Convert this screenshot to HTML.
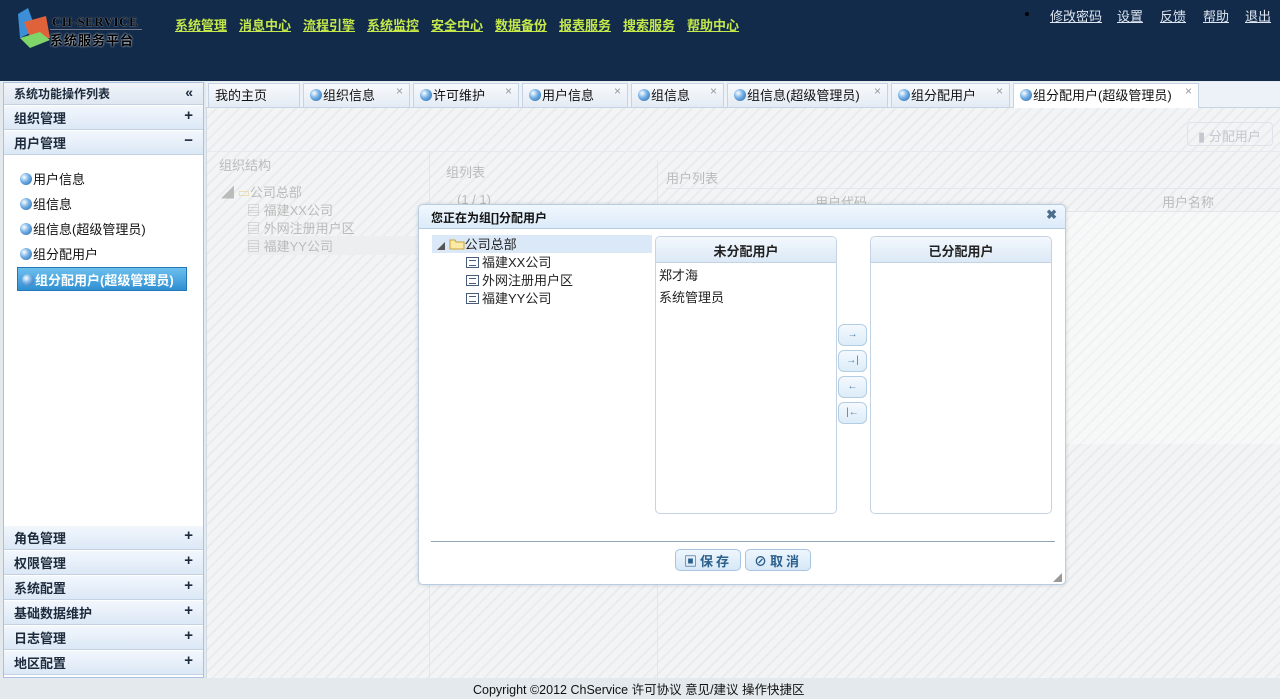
<!DOCTYPE html>
<html><head><meta charset="utf-8">
<style>
*{margin:0;padding:0;box-sizing:border-box}
body{width:1280px;height:699px;overflow:hidden;position:relative;font-family:"Liberation Sans","Noto Sans CJK SC",sans-serif;font-size:12px;color:#222;background:#e3e9ed}
.abs{position:absolute}
#hdr{left:0;top:0;width:1280px;height:81px;background:#122b4b}
.nav a{position:absolute;top:15px;color:#c5e84a;text-decoration:underline;font-weight:bold;font-size:13px;white-space:nowrap}
.top a{position:absolute;top:6px;color:#dfe6f0;text-decoration:underline;font-size:13px;white-space:nowrap}
.stripe{background:repeating-linear-gradient(135deg,#f3f4f5 0,#f3f4f5 6px,#e9ebed 6px,#e9ebed 8px)}
.sbh{left:4px;width:199px;height:24px;background:linear-gradient(#f3f7fd,#dce8f6);border-bottom:1px solid #c4d3e4;font-weight:bold;font-size:13px;color:#1c2a3c;padding:2px 0 0 10px}
.sbh b{position:absolute;right:10px;top:1px;font-size:15px}
.it{left:20px;font-size:13px;color:#111}
.ball{display:inline-block;width:12px;height:12px;border-radius:50%;background:radial-gradient(circle at 35% 35%,#fff 0,#7ab4e8 40%,#1f63a8 100%);vertical-align:-1px;margin-right:1px}
.tab{top:83px;height:24px;background:linear-gradient(#f7f9fc,#e4ebf4);border:1px solid #c6d3e2;border-bottom:none;font-size:13px;padding:1px 0 0 6px;color:#111}
.tab i{position:absolute;right:6px;top:0px;font-style:normal;color:#999;font-size:12px}
.fade{color:#bbb}
.btn{height:22px;border:1px solid #a9c4de;border-radius:5px;background:linear-gradient(#eef6fd,#d6e8f7);color:#2b5f8c;font-weight:bold;font-size:13px;text-align:center;padding-top:1px;letter-spacing:3px}
.ar{left:838px;width:29px;height:22px;border:1px solid #b3cde3;border-radius:6px;background:linear-gradient(#f4f9fe,#dcecf8);color:#4a7ea8;font-size:10px;text-align:center;line-height:20px}
.doc{display:inline-block;width:13px;height:11px;border:1px solid #4a5d78;background:#fff;vertical-align:-1px;margin-right:3px;position:relative}
.doc:after{content:"";position:absolute;left:2px;top:2px;width:7px;height:4px;border-top:1px solid #4a5d78;border-bottom:1px solid #4a5d78}
</style></head><body>
<div id="hdr" class="abs">
 <svg class="abs" style="left:14px;top:8px" width="40" height="42"><polygon points="4,6 14,0 22,22 6,30" fill="#3c8fd6"/><polygon points="10,14 32,8 36,30 18,34" fill="#e0623a"/><polygon points="6,30 26,24 36,32 16,40" fill="#7fd46a"/></svg>
 <div class="abs" style="left:52px;top:14px;font-family:'Liberation Serif',serif;font-weight:bold;font-size:13px;color:#000;text-shadow:0 0 1px #fff;letter-spacing:0.5px">CH-SERVICE</div>
 <div class="abs" style="left:50px;top:29px;width:92px;border-top:1px solid #778"></div>
 <div class="abs" style="left:50px;top:30px;font-size:13px;color:#000;font-weight:bold;letter-spacing:1px;text-shadow:0 0 2px #fff">系统服务平台</div>
 <div class="nav"><a style="left:175px">系统管理</a><a style="left:239px">消息中心</a><a style="left:303px">流程引擎</a><a style="left:367px">系统监控</a><a style="left:431px">安全中心</a><a style="left:495px">数据备份</a><a style="left:559px">报表服务</a><a style="left:623px">搜索服务</a><a style="left:687px">帮助中心</a></div>
 <div class="abs" style="left:1025px;top:12px;width:4px;height:4px;border-radius:50%;background:#000"></div>
 <div class="top"><a style="left:1050px">修改密码</a><a style="left:1117px">设置</a><a style="left:1160px">反馈</a><a style="left:1203px">帮助</a><a style="left:1245px">退出</a></div>
</div>

<!-- sidebar -->
<div class="abs" style="left:3px;top:82px;width:201px;height:596px;background:#fff;border:1px solid #a9c1dc"></div>
<div class="abs sbh" style="top:83px;height:22px;padding-top:2px;font-size:12px;background:linear-gradient(#f1f5fa,#dfe7f1)">系统功能操作列表<b style="font-size:14px">«</b></div>
<div class="abs sbh" style="top:106px">组织管理<b>+</b></div>
<div class="abs sbh" style="top:131px">用户管理<b>−</b></div>
<div class="abs it" style="top:169px"><span class="ball"></span>用户信息</div>
<div class="abs it" style="top:194px"><span class="ball"></span>组信息</div>
<div class="abs it" style="top:219px"><span class="ball"></span>组信息(超级管理员)</div>
<div class="abs it" style="top:244px"><span class="ball"></span>组分配用户</div>
<div class="abs" style="left:17px;top:267px;width:170px;height:24px;background:linear-gradient(#6cc0ee,#2f8fd2);border:1px solid #2476b6;color:#fff;font-weight:bold;font-size:13px;padding:2px 0 0 4px"><span class="ball"></span>组分配用户(超级管理员)</div>
<div class="abs sbh" style="top:526px">角色管理<b>+</b></div>
<div class="abs sbh" style="top:551px">权限管理<b>+</b></div>
<div class="abs sbh" style="top:576px">系统配置<b>+</b></div>
<div class="abs sbh" style="top:601px">基础数据维护<b>+</b></div>
<div class="abs sbh" style="top:626px">日志管理<b>+</b></div>
<div class="abs sbh" style="top:651px">地区配置<b>+</b></div>

<!-- tabs -->
<div class="abs" style="left:206px;top:82px;width:1074px;height:26px;background:#edf2f8;border-bottom:1px solid #c6d3e2"></div>
<div class="abs tab" style="left:208px;width:92px">我的主页</div>
<div class="abs tab" style="left:303px;width:107px"><span class="ball"></span>组织信息<i>×</i></div>
<div class="abs tab" style="left:413px;width:106px"><span class="ball"></span>许可维护<i>×</i></div>
<div class="abs tab" style="left:522px;width:106px"><span class="ball"></span>用户信息<i>×</i></div>
<div class="abs tab" style="left:631px;width:93px"><span class="ball"></span>组信息<i>×</i></div>
<div class="abs tab" style="left:727px;width:161px"><span class="ball"></span>组信息(超级管理员)<i>×</i></div>
<div class="abs tab" style="left:891px;width:119px"><span class="ball"></span>组分配用户<i>×</i></div>
<div class="abs tab" style="left:1013px;width:186px;background:#fff;height:26px"><span class="ball"></span>组分配用户(超级管理员)<i>×</i></div>

<!-- main faded content -->
<div class="abs stripe" style="left:206px;top:108px;width:1074px;height:570px;border-left:1px solid #d0dbe6"></div>
<div class="abs" style="left:1187px;top:122px;width:86px;height:24px;border:1px solid #dde3ea;border-radius:4px;color:#c2c8ce;font-size:13px;padding:3px 0 0 10px">▮ 分配用户</div>
<div class="abs" style="left:207px;top:151px;width:1073px;border-top:1px solid #e6eaee"></div>
<div class="abs fade" style="left:219px;top:155px;font-size:13px">组织结构</div>
<div class="abs" style="left:429px;top:152px;height:526px;border-left:1px solid #e2e6ea"></div>
<div class="abs" style="left:657px;top:160px;height:518px;border-left:1px solid #e2e6ea"></div>
<div class="abs fade" style="left:446px;top:162px;font-size:13px">组列表</div>
<div class="abs fade" style="left:666px;top:168px;font-size:13px">用户列表</div>
<div class="abs" style="left:666px;top:188px;width:614px;height:24px;border-top:1px solid #e3e7eb;border-bottom:1px solid #e3e7eb"></div>
<div class="abs fade" style="left:815px;top:192px;font-size:13px">用户代码</div>
<div class="abs fade" style="left:1162px;top:192px;font-size:13px">用户名称</div>
<div class="abs fade" style="left:457px;top:192px;font-size:13px">(1 / 1)</div>
<div class="abs" style="left:1066px;top:212px;width:214px;height:232px;background:rgba(255,255,255,0.35)"></div>
<div class="abs fade" style="left:221px;top:182px;font-size:13px">◢ <span style="color:#ead9a0">▭</span>公司总部</div>
<div class="abs fade" style="left:247px;top:200px;font-size:13px">▤ 福建XX公司</div>
<div class="abs fade" style="left:247px;top:218px;font-size:13px">▤ 外网注册用户区</div>
<div class="abs fade" style="left:247px;top:236px;font-size:13px;background:#eceef0;width:170px">▤ 福建YY公司</div>

<!-- dialog -->
<div class="abs" style="left:418px;top:204px;width:648px;height:381px;background:#fff;border:1px solid #b7cde2;border-radius:5px;box-shadow:0 0 4px rgba(0,0,0,.15)"></div>
<div class="abs" style="left:419px;top:205px;width:646px;height:24px;background:linear-gradient(#f0f7fe,#dcebf9);border-bottom:1px solid #b7cde2;border-radius:5px 5px 0 0;font-weight:bold;font-size:12px;padding:4px 0 0 12px;color:#111">您正在为组[]分配用户<span style="position:absolute;right:8px;top:2px;color:#4d6d8c;font-size:13px">✖</span></div>
<div class="abs" style="left:432px;top:235px;width:220px;height:18px;background:#dbe8f7"></div>
<div class="abs" style="left:437px;top:234px;font-size:13px"><span style="font-size:8px;color:#555">◢</span> <svg width="16" height="12" style="vertical-align:-1px"><path d="M1 2h5l1 2h8v7H1z" fill="#fbe9a6" stroke="#c9a43a"/></svg>公司总部</div>
<div class="abs" style="left:466px;top:252px;font-size:13px"><span class="doc"></span>福建XX公司</div>
<div class="abs" style="left:466px;top:270px;font-size:13px"><span class="doc"></span>外网注册用户区</div>
<div class="abs" style="left:466px;top:288px;font-size:13px"><span class="doc"></span>福建YY公司</div>

<div class="abs" style="left:655px;top:236px;width:182px;height:278px;border:1px solid #c3d3e3;border-radius:5px"></div>
<div class="abs" style="left:656px;top:237px;width:180px;height:26px;background:linear-gradient(#f3f8fd,#dce9f6);border-bottom:1px solid #c3d3e3;border-radius:5px 5px 0 0;text-align:center;font-weight:bold;font-size:13px;padding-top:4px">未分配用户</div>
<div class="abs" style="left:659px;top:265px;font-size:13px">郑才海</div>
<div class="abs" style="left:659px;top:287px;font-size:13px">系统管理员</div>
<div class="abs" style="left:870px;top:236px;width:182px;height:278px;border:1px solid #c3d3e3;border-radius:5px"></div>
<div class="abs" style="left:871px;top:237px;width:180px;height:26px;background:linear-gradient(#f3f8fd,#dce9f6);border-bottom:1px solid #c3d3e3;border-radius:5px 5px 0 0;text-align:center;font-weight:bold;font-size:13px;padding-top:4px">已分配用户</div>
<div class="abs ar" style="top:324px">→</div>
<div class="abs ar" style="top:350px">→|</div>
<div class="abs ar" style="top:376px">←</div>
<div class="abs ar" style="top:402px">|←</div>
<div class="abs" style="left:431px;top:541px;width:624px;border-top:1px solid #8fa6b4"></div>
<div class="abs btn" style="left:675px;top:549px;width:66px">▣保存</div>
<div class="abs btn" style="left:745px;top:549px;width:66px">⊘取消</div>
<div class="abs" style="left:1053px;top:571px;color:#999;font-size:9px">◢</div>

<div class="abs" style="left:473px;top:679px;font-size:12.5px;color:#111">Copyright ©2012 ChService 许可协议 意见/建议 操作快捷区</div>
</body></html>
